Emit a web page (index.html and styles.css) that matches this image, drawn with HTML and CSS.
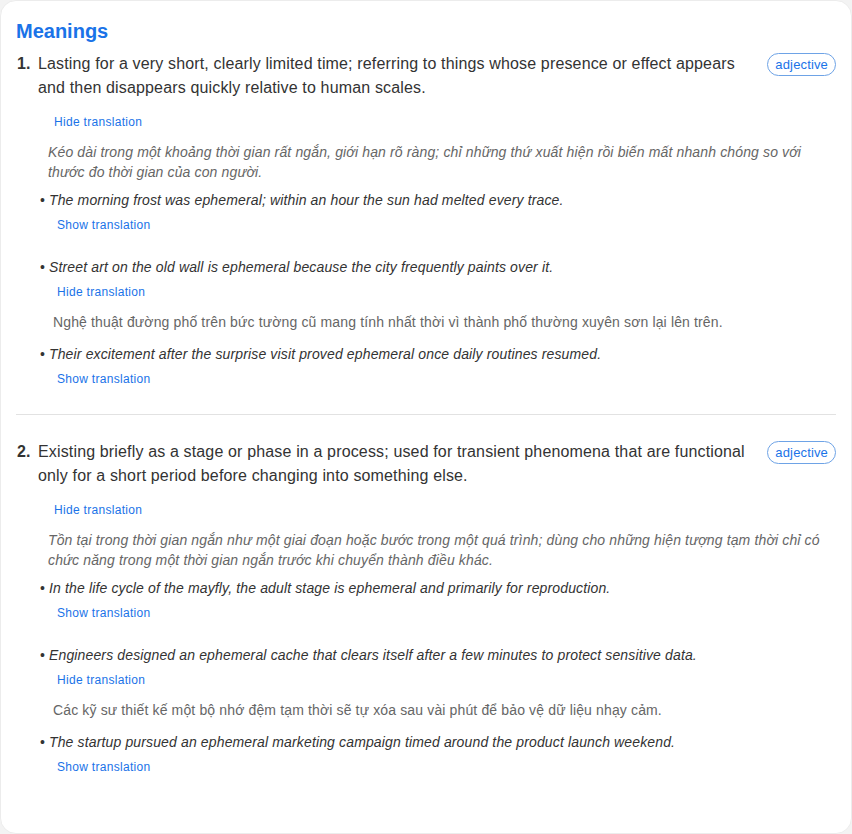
FILE: index.html
```html
<!DOCTYPE html>
<html lang="en">
<head>
<meta charset="utf-8">
<title>Meanings</title>
<link rel="stylesheet" href="styles.css">
</head>
<body>
<div class="card">
  <h2 class="title">Meanings</h2>

  <section class="meaning">
    <div class="def-row">
      <span class="num">1.</span>
      <p class="def">Lasting for a very short, clearly limited time; referring to things whose presence or effect appears and then disappears quickly relative to human scales.</p>
      <span class="badge">adjective</span>
    </div>
    <div class="def-trans">
      <button class="toggle">Hide translation</button>
      <p class="trans-italic">Kéo dài trong một khoảng thời gian rất ngắn, giới hạn rõ ràng; chỉ những thứ xuất hiện rồi biến mất nhanh chóng so với thước đo thời gian của con người.</p>
    </div>
    <ul class="examples">
      <li class="ex collapsed">
        <p class="ex-text"><span class="dot">•</span><em>The morning frost was ephemeral; within an hour the sun had melted every trace.</em></p>
        <button class="toggle ex-toggle">Show translation</button>
      </li>
      <li class="ex">
        <p class="ex-text"><span class="dot">•</span><em>Street art on the old wall is ephemeral because the city frequently paints over it.</em></p>
        <button class="toggle ex-toggle">Hide translation</button>
        <p class="ex-trans">Nghệ thuật đường phố trên bức tường cũ mang tính nhất thời vì thành phố thường xuyên sơn lại lên trên.</p>
      </li>
      <li class="ex last">
        <p class="ex-text"><span class="dot">•</span><em>Their excitement after the surprise visit proved ephemeral once daily routines resumed.</em></p>
        <button class="toggle ex-toggle">Show translation</button>
      </li>
    </ul>
  </section>

  <section class="meaning">
    <div class="def-row">
      <span class="num">2.</span>
      <p class="def">Existing briefly as a stage or phase in a process; used for transient phenomena that are functional only for a short period before changing into something else.</p>
      <span class="badge">adjective</span>
    </div>
    <div class="def-trans">
      <button class="toggle">Hide translation</button>
      <p class="trans-italic">Tồn tại trong thời gian ngắn như một giai đoạn hoặc bước trong một quá trình; dùng cho những hiện tượng tạm thời chỉ có chức năng trong một thời gian ngắn trước khi chuyển thành điều khác.</p>
    </div>
    <ul class="examples">
      <li class="ex collapsed">
        <p class="ex-text"><span class="dot">•</span><em>In the life cycle of the mayfly, the adult stage is ephemeral and primarily for reproduction.</em></p>
        <button class="toggle ex-toggle">Show translation</button>
      </li>
      <li class="ex">
        <p class="ex-text"><span class="dot">•</span><em>Engineers designed an ephemeral cache that clears itself after a few minutes to protect sensitive data.</em></p>
        <button class="toggle ex-toggle">Hide translation</button>
        <p class="ex-trans">Các kỹ sư thiết kế một bộ nhớ đệm tạm thời sẽ tự xóa sau vài phút để bảo vệ dữ liệu nhạy cảm.</p>
      </li>
      <li class="ex last">
        <p class="ex-text"><span class="dot">•</span><em>The startup pursued an ephemeral marketing campaign timed around the product launch weekend.</em></p>
        <button class="toggle ex-toggle">Show translation</button>
      </li>
    </ul>
  </section>
</div>
</body>
</html>
```

FILE: styles.css
```css
* {
  box-sizing: border-box;
}

html, body {
  margin: 0;
  padding: 0;
  background: #f3f3f3;
}

body {
  font-family: "Liberation Sans", Arial, sans-serif;
  color: #333;
}

.card {
  width: 852px;
  height: 834px;
  background: #fff;
  border: 1px solid #ececec;
  border-radius: 16px;
  padding: 16px 15px 0 15px;
  overflow: hidden;
}

.title {
  margin: 0;
  font-size: 20px;
  line-height: 28px;
  font-weight: bold;
  color: #1a73e8;
}

.meaning {
  padding-bottom: 25px;
}

.meaning + .meaning {
  border-top: 1px solid #e2e2e2;
  padding-top: 25px;
}

.meaning:first-of-type {
  padding-top: 7px;
}

.def-row {
  display: flex;
  align-items: flex-start;
}

.num {
  flex: none;
  width: 22px;
  padding-left: 1px;
  font-size: 16px;
  line-height: 24px;
  font-weight: bold;
  color: #333;
}

.def {
  flex: 1;
  margin: 0;
  font-size: 16px;
  line-height: 24px;
  letter-spacing: 0.15px;
  color: #333;
  padding-right: 20px;
}

.badge {
  flex: none;
  margin-top: 1px;
  height: 23px;
  padding: 0 7px;
  border: 1px solid #6ea3e6;
  border-radius: 12px;
  font-size: 13px;
  line-height: 21px;
  letter-spacing: 0.15px;
  color: #1a73e8;
  background: #fff;
}

.toggle {
  display: block;
  border: 0;
  background: none;
  padding: 2px 6px;
  margin: 0;
  font-family: "Liberation Sans", Arial, sans-serif;
  font-size: 12px;
  line-height: 16px;
  letter-spacing: 0.3px;
  color: #1a73e8;
  cursor: pointer;
}

.def-trans {
  padding-left: 32px;
  margin-top: 12px;
}

.trans-italic {
  margin: 10px 0 0 0;
  font-size: 14px;
  line-height: 20px;
  letter-spacing: 0.14px;
  font-style: italic;
  color: #666;
}

.examples {
  list-style: none;
  margin: 8px 0 0 0;
  padding: 0 0 0 24px;
}

.ex {
  margin-bottom: 12px;
}

.ex.collapsed {
  padding-bottom: 10px;
}

.ex.last {
  margin-bottom: 0;
}

.ex-text {
  margin: 0;
  font-size: 14px;
  line-height: 20px;
  letter-spacing: 0.14px;
  color: #333;
}

.dot {
  display: inline-block;
  width: 9px;
  font-style: normal;
}

.ex-toggle {
  margin-top: 5px;
  margin-left: 11px;
}

.ex-trans {
  margin: 10px 0 0 13px;
  font-size: 14px;
  line-height: 20px;
  letter-spacing: 0.14px;
  color: #666;
}
```
